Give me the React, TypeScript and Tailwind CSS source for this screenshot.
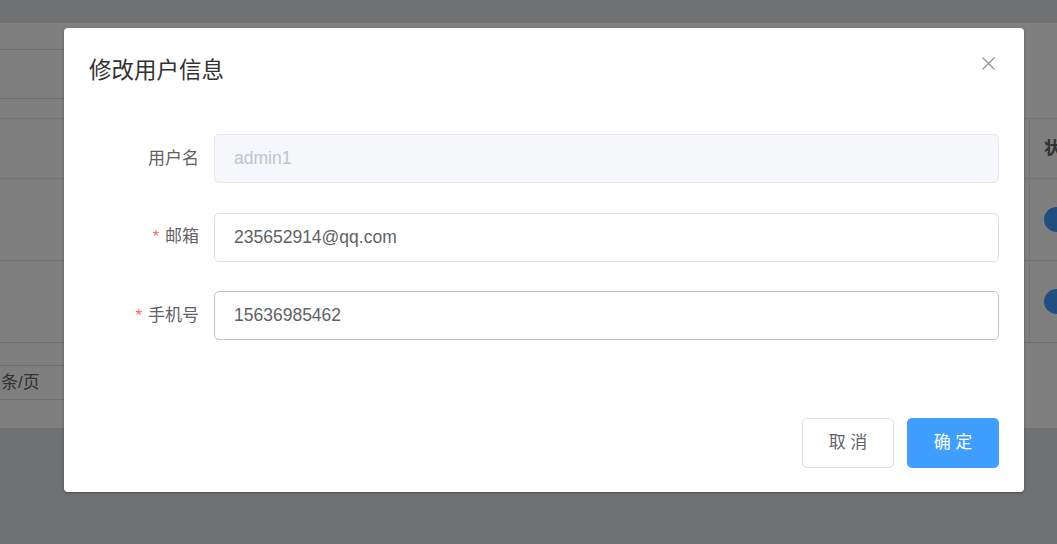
const font = { fontFamily: '"Liberation Sans", Arial, "Noto Sans CJK SC", sans-serif' };

type Row = { label: string; value: string; required?: boolean; disabled?: boolean; active?: boolean };

const rows: Row[] = [
  { label: "用户名", value: "admin1", disabled: true },
  { label: "邮箱", value: "235652914@qq.com", required: true },
  { label: "手机号", value: "15636985462", required: true, active: true },
];

function Background() {
  return (
    <div className="flex h-full flex-col bg-[#e0e2e7]">
      <div className="h-[23px] shrink-0" />
      <div className="flex h-[405px] shrink-0 flex-col bg-white">
        {/* search box, mostly hidden under the dialog */}
        <div className="-ml-[10px] mt-[26px] h-[50px] w-[340px] rounded border border-[#dcdfe6]" />
        {/* table */}
        <div className="mt-[19px] flex flex-col border-t border-[#e4e7ed]">
          <div className="flex h-[60px] border-b border-[#e4e7ed]">
            <div className="flex-1" />
            <div className="flex w-[28px] items-center border-l border-[#e4e7ed] pl-[14px] text-[17px] font-bold text-[#606266] whitespace-nowrap">
              状态
            </div>
          </div>
          {[0, 1].map((i) => (
            <div key={i} className="flex h-[82px] border-b border-[#dcdfe6]">
              <div className="flex-1" />
              <div className="flex w-[28px] items-center overflow-hidden border-l border-[#e4e7ed] pl-[14px]">
                <div className="h-[25px] w-[52px] shrink-0 rounded-full bg-[#409eff]" />
              </div>
            </div>
          ))}
        </div>
        {/* page size select */}
        <div className="-ml-[20px] mt-[22px] flex h-[35px] w-[150px] items-center rounded border border-[#dcdfe6] pl-[20px] text-[17px] text-[#606266]">
          条/页
        </div>
      </div>
    </div>
  );
}

function Field({ row }: { row: Row }) {
  return (
    <div className="flex h-[49px] items-center">
      <label className="flex w-[125px] shrink-0 items-center justify-end pr-[15px] text-[17px] text-[#606266]">
        {row.required && <span className="mr-[6px] text-[#f56c6c]">*</span>}
        {row.label}
      </label>
      <div
        className={`flex h-full flex-1 items-center rounded-[5px] border px-[19px] text-[17.5px] ${
          row.disabled
            ? "border-[#e4e7ed] bg-[#f5f7fa] text-[#c0c4cc]"
            : row.active
            ? "border-[#c0c4cc] bg-white text-[#606266]"
            : "border-[#dcdfe6] bg-white text-[#606266]"
        }`}
      >
        {row.value}
      </div>
    </div>
  );
}

export default function App() {
  return (
    <div className="relative h-[544px] w-full overflow-hidden" style={font}>
      <Background />
      <div className="absolute inset-0 flex items-start bg-black/50 pl-[64px] pt-[28px]">
        <div className="relative flex h-[464px] w-[960px] flex-col rounded-[4px] bg-white px-[25px] pb-[24px] pt-[26px] shadow-[0_1px_3px_rgba(0,0,0,0.3)]">
          <div className="text-[22.5px] leading-[34px] text-[#303133]">修改用户信息</div>
          <button className="absolute right-[28px] top-[28px] flex h-[15px] w-[15px] items-center justify-center text-[#909399]">
            <svg width="13" height="13" viewBox="0 0 13 13" fill="none" stroke="currentColor" strokeWidth="1.2">
              <path d="M0.5 0.5 L12.5 12.5 M12.5 0.5 L0.5 12.5" />
            </svg>
          </button>
          <div className="mt-[46px] flex flex-col gap-[29.5px]">
            {rows.map((r) => (
              <Field key={r.label} row={r} />
            ))}
          </div>
          <div className="mt-auto flex justify-end gap-[13px]">
            <button className="h-[50px] w-[92px] rounded-[5px] border border-[#dcdfe6] bg-white text-[17px] text-[#606266]">
              取 消
            </button>
            <button className="h-[50px] w-[92px] rounded-[5px] bg-[#409eff] text-[17px] text-white">
              确 定
            </button>
          </div>
        </div>
      </div>
    </div>
  );
}
